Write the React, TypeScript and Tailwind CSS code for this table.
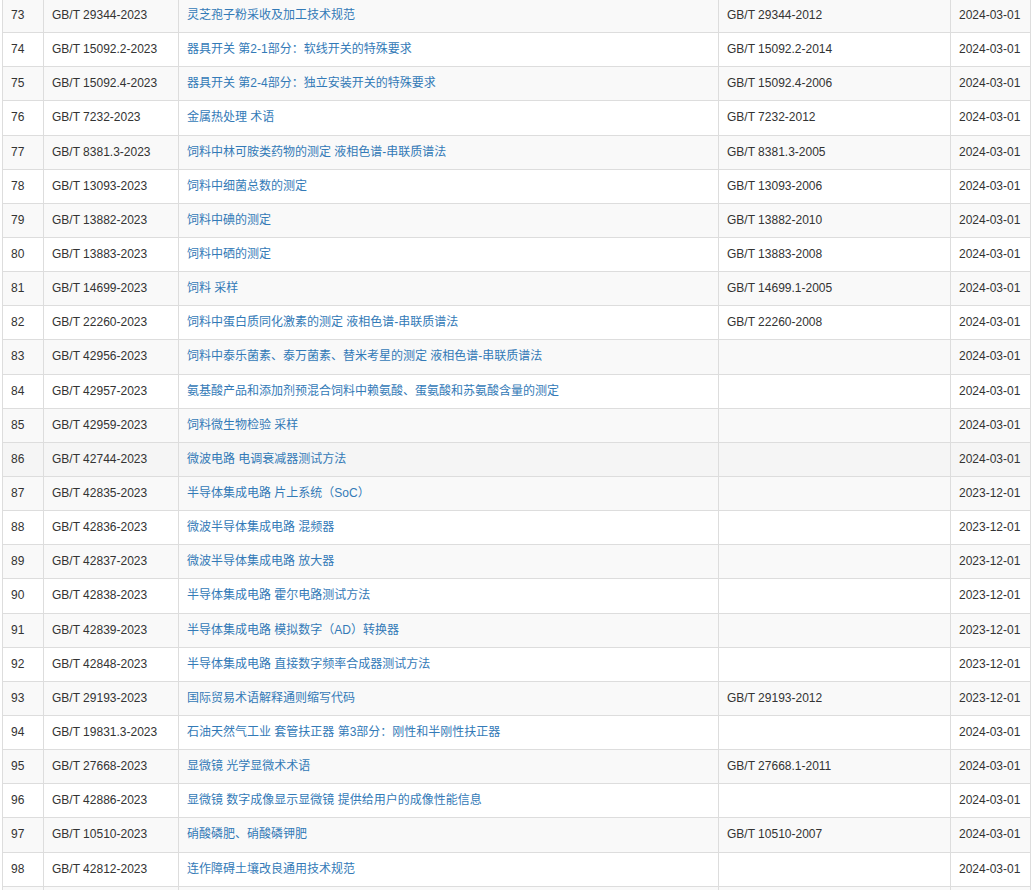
import React from 'react';

type Row = [string, string, string, string, string];

const ROWS: Row[] = [
  ['73', 'GB/T 29344-2023', '灵芝孢子粉采收及加工技术规范', 'GB/T 29344-2012', '2024-03-01'],
  ['74', 'GB/T 15092.2-2023', '器具开关 第2-1部分：软线开关的特殊要求', 'GB/T 15092.2-2014', '2024-03-01'],
  ['75', 'GB/T 15092.4-2023', '器具开关 第2-4部分：独立安装开关的特殊要求', 'GB/T 15092.4-2006', '2024-03-01'],
  ['76', 'GB/T 7232-2023', '金属热处理 术语', 'GB/T 7232-2012', '2024-03-01'],
  ['77', 'GB/T 8381.3-2023', '饲料中林可胺类药物的测定 液相色谱-串联质谱法', 'GB/T 8381.3-2005', '2024-03-01'],
  ['78', 'GB/T 13093-2023', '饲料中细菌总数的测定', 'GB/T 13093-2006', '2024-03-01'],
  ['79', 'GB/T 13882-2023', '饲料中碘的测定', 'GB/T 13882-2010', '2024-03-01'],
  ['80', 'GB/T 13883-2023', '饲料中硒的测定', 'GB/T 13883-2008', '2024-03-01'],
  ['81', 'GB/T 14699-2023', '饲料 采样', 'GB/T 14699.1-2005', '2024-03-01'],
  ['82', 'GB/T 22260-2023', '饲料中蛋白质同化激素的测定 液相色谱-串联质谱法', 'GB/T 22260-2008', '2024-03-01'],
  ['83', 'GB/T 42956-2023', '饲料中泰乐菌素、泰万菌素、替米考星的测定 液相色谱-串联质谱法', '', '2024-03-01'],
  ['84', 'GB/T 42957-2023', '氨基酸产品和添加剂预混合饲料中赖氨酸、蛋氨酸和苏氨酸含量的测定', '', '2024-03-01'],
  ['85', 'GB/T 42959-2023', '饲料微生物检验 采样', '', '2024-03-01'],
  ['86', 'GB/T 42744-2023', '微波电路 电调衰减器测试方法', '', '2024-03-01'],
  ['87', 'GB/T 42835-2023', '半导体集成电路 片上系统（SoC）', '', '2023-12-01'],
  ['88', 'GB/T 42836-2023', '微波半导体集成电路 混频器', '', '2023-12-01'],
  ['89', 'GB/T 42837-2023', '微波半导体集成电路 放大器', '', '2023-12-01'],
  ['90', 'GB/T 42838-2023', '半导体集成电路 霍尔电路测试方法', '', '2023-12-01'],
  ['91', 'GB/T 42839-2023', '半导体集成电路 模拟数字（AD）转换器', '', '2023-12-01'],
  ['92', 'GB/T 42848-2023', '半导体集成电路 直接数字频率合成器测试方法', '', '2023-12-01'],
  ['93', 'GB/T 29193-2023', '国际贸易术语解释通则缩写代码', 'GB/T 29193-2012', '2023-12-01'],
  ['94', 'GB/T 19831.3-2023', '石油天然气工业 套管扶正器 第3部分：刚性和半刚性扶正器', '', '2024-03-01'],
  ['95', 'GB/T 27668-2023', '显微镜 光学显微术术语', 'GB/T 27668.1-2011', '2024-03-01'],
  ['96', 'GB/T 42886-2023', '显微镜 数字成像显示显微镜 提供给用户的成像性能信息', '', '2024-03-01'],
  ['97', 'GB/T 10510-2023', '硝酸磷肥、硝酸磷钾肥', 'GB/T 10510-2007', '2024-03-01'],
  ['98', 'GB/T 42812-2023', '连作障碍土壤改良通用技术规范', '', '2024-03-01'],
];

const HOVER_ROW = '86';

const App: React.FC = () => {
  return (
    <div
      className="h-[890px] w-[1032px] overflow-hidden bg-white text-[12px] leading-[1.42857143] text-[#333]"
      style={{ fontFamily: '"Liberation Sans", Arial, "Noto Sans CJK SC", sans-serif' }}
    >
      <table className="-mt-[2px] ml-[2px] w-[1028px] table-fixed border-collapse border border-[#ddd]">
        <colgroup>
          <col className="w-[41px]" />
          <col className="w-[135px]" />
          <col className="w-[540px]" />
          <col className="w-[232px]" />
          <col className="w-[80px]" />
        </colgroup>
        <tbody>
          {ROWS.map((r, i) => {
            const bg = r[0] === HOVER_ROW ? 'bg-[#f5f5f5]' : i % 2 === 0 ? 'bg-[#f9f9f9]' : 'bg-white';
            return (
              <tr key={r[0]} className={bg}>
                <td className="border border-[#ddd] p-[8px] align-top">{r[0]}</td>
                <td className="border border-[#ddd] p-[8px] align-top whitespace-nowrap">{r[1]}</td>
                <td className="border border-[#ddd] p-[8px] align-top">
                  <a href="#" className="text-[#337ab7]">{r[2]}</a>
                </td>
                <td className="border border-[#ddd] p-[8px] align-top">{r[3]}</td>
                <td className="border border-[#ddd] p-[8px] align-top whitespace-nowrap">{r[4]}</td>
              </tr>
            );
          })}
          {/* next row, only its top edge shows */}
          <tr className="bg-[#f9f9f9]">
            <td className="border border-[#ddd] p-[8px]">&nbsp;</td>
            <td className="border border-[#ddd] p-[8px]">&nbsp;</td>
            <td className="border border-[#ddd] p-[8px]">&nbsp;</td>
            <td className="border border-[#ddd] p-[8px]">&nbsp;</td>
            <td className="border border-[#ddd] p-[8px]">&nbsp;</td>
          </tr>
        </tbody>
      </table>
    </div>
  );
};

export default App;
